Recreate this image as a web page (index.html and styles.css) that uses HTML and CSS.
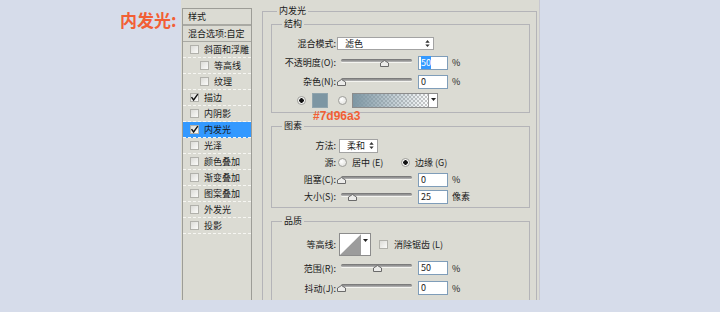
FILE: index.html
```html
<!DOCTYPE html>
<html lang="zh-CN">
<head>
<meta charset="UTF-8">
<title>内发光</title>
<link rel="stylesheet" href="styles.css">
</head>
<body>
<div class="page">
    <div class="title">内发光:</div>
    <div class="dialog">
        <ul class="styles">
            <li class="head">样式</li>
            <li class="blend">混合选项:自定</li>
            <li class="item"><span class="cb"></span>斜面和浮雕</li>
            <li class="item sub"><span class="cb"></span>等高线</li>
            <li class="item sub"><span class="cb"></span>纹理</li>
            <li class="item"><span class="cb"><svg viewBox="0 0 9 9"><path d="M1.5 4.2 L3.6 7 L7.8 1.2"/></svg></span>描边</li>
            <li class="item"><span class="cb"></span>内阴影</li>
            <li class="item active"><span class="cb"><svg viewBox="0 0 9 9"><path d="M1.5 4.2 L3.6 7 L7.8 1.2"/></svg></span>内发光</li>
            <li class="item"><span class="cb"></span>光泽</li>
            <li class="item"><span class="cb"></span>颜色叠加</li>
            <li class="item"><span class="cb"></span>渐变叠加</li>
            <li class="item"><span class="cb"></span>图案叠加</li>
            <li class="item"><span class="cb"></span>外发光</li>
            <li class="item"><span class="cb"></span>投影</li>
        </ul>

        <div class="main">
            <fieldset class="outer">
                <legend>内发光</legend>

                <fieldset class="group g1">
                    <legend>结构</legend>
                    <div class="row">
                        <span class="lbl">混合模式:</span>
                        <div class="select wide">滤色<svg class="updown" viewBox="0 0 5 8"><path d="M0 3 L2.5 0 L5 3 Z M0 5 L2.5 8 L5 5 Z"/></svg></div>
                    </div>
                    <div class="row">
                        <span class="lbl">不透明度(O):</span>
                        <div class="slider"><span class="track"></span><svg class="thumb" style="left:60%" viewBox="0 0 9 7"><path d="M0.5 6.5 V3 L4.5 0.5 L8.5 3 V6.5 Z"/></svg></div>
                        <div class="field"><span class="sel">50</span></div>
                        <span class="unit">%</span>
                    </div>
                    <div class="row">
                        <span class="lbl">杂色(N):</span>
                        <div class="slider"><span class="track"></span><svg class="thumb" style="left:0%" viewBox="0 0 9 7"><path d="M0.5 6.5 V3 L4.5 0.5 L8.5 3 V6.5 Z"/></svg></div>
                        <div class="field">0</div>
                        <span class="unit">%</span>
                    </div>
                    <div class="row colors">
                        <span class="radio on"></span>
                        <span class="swatch"></span>
                        <span class="radio r2"></span>
                        <div class="gradient"><span class="drop"><svg viewBox="0 0 5 3"><path d="M0 0 H5 L2.5 3 Z"/></svg></span></div>
                    </div>
                </fieldset>

                <fieldset class="group g2">
                    <legend>图素</legend>
                    <div class="row">
                        <span class="lbl">方法:</span>
                        <div class="select short">柔和<svg class="updown" viewBox="0 0 5 8"><path d="M0 3 L2.5 0 L5 3 Z M0 5 L2.5 8 L5 5 Z"/></svg></div>
                    </div>
                    <div class="row">
                        <span class="lbl">源:</span>
                        <span class="opt"><span class="radio"></span>居中 (E)</span>
                        <span class="opt"><span class="radio on"></span>边缘 (G)</span>
                    </div>
                    <div class="row">
                        <span class="lbl">阻塞(C):</span>
                        <div class="slider"><span class="track"></span><svg class="thumb" style="left:0%" viewBox="0 0 9 7"><path d="M0.5 6.5 V3 L4.5 0.5 L8.5 3 V6.5 Z"/></svg></div>
                        <div class="field">0</div>
                        <span class="unit">%</span>
                    </div>
                    <div class="row">
                        <span class="lbl">大小(S):</span>
                        <div class="slider"><span class="track"></span><svg class="thumb" style="left:15%" viewBox="0 0 9 7"><path d="M0.5 6.5 V3 L4.5 0.5 L8.5 3 V6.5 Z"/></svg></div>
                        <div class="field">25</div>
                        <span class="unit">像素</span>
                    </div>
                </fieldset>

                <fieldset class="group g3">
                    <legend>品质</legend>
                    <div class="row tall">
                        <span class="lbl">等高线:</span>
                        <div class="contour">
                            <svg class="curve" viewBox="0 0 22 21" preserveAspectRatio="none"><path d="M0 21 L22 0 V21 Z"/></svg>
                            <span class="drop"><svg viewBox="0 0 5 3"><path d="M0 0 H5 L2.5 3 Z"/></svg></span>
                        </div>
                        <span class="cb aa"></span>
                        <span class="aa-text">消除锯齿 (L)</span>
                    </div>
                    <div class="row first">
                        <span class="lbl">范围(R):</span>
                        <div class="slider"><span class="track"></span><svg class="thumb" style="left:50%" viewBox="0 0 9 7"><path d="M0.5 6.5 V3 L4.5 0.5 L8.5 3 V6.5 Z"/></svg></div>
                        <div class="field">50</div>
                        <span class="unit">%</span>
                    </div>
                    <div class="row">
                        <span class="lbl">抖动(J):</span>
                        <div class="slider"><span class="track"></span><svg class="thumb" style="left:0%" viewBox="0 0 9 7"><path d="M0.5 6.5 V3 L4.5 0.5 L8.5 3 V6.5 Z"/></svg></div>
                        <div class="field">0</div>
                        <span class="unit">%</span>
                    </div>
                </fieldset>
            </fieldset>
        </div>

        <div class="note">#7d96a3</div>
    </div>
</div>
</body>
</html>
```

FILE: styles.css
```css
* {
    box-sizing: border-box;
}
body {
    margin: 0;
    width: 720px;
    height: 312px;
    overflow: hidden;
    background-color: #d6dcea; /* fondo azulado */
    font-family: "Noto Sans CJK SC", "Noto Sans", sans-serif;
    font-size: 9px;
    color: #1a1a1a;
}
.page {
    display: flex;
    height: 312px;
    padding-left: 120px;
}
.title {
    width: 61px;
    padding-top: 9px;
    font-size: 17px;
    line-height: 22px;
    font-weight: bold;
    color: #f25f35;
}
.dialog {
    position: relative;
    display: flex;
    width: 359px;
    height: 300px;
    overflow: hidden;
    background-color: #dbdbd3;
    border-right: 1px solid #c8c8d0;
}

/* lista de estilos */
.styles {
    list-style: none;
    margin: 8px 0 0 1px;
    padding: 0;
    width: 70px;
    height: 292px;
    border: 1px solid #9d9d97;
    border-bottom: none;
}
.styles .head {
    height: 17px;
    line-height: 15px;
    padding-left: 5px;
    border-bottom: 2px solid #a9a9a3;
}
.styles .blend {
    height: 16px;
    line-height: 15px;
    padding-left: 5px;
    border-bottom: 1px solid #a9a9a3;
}
.styles .item {
    display: flex;
    align-items: center;
    gap: 5px;
    height: 16px;
    padding-left: 7px;
    border-bottom: 1px dashed #f6f6f2;
}
.styles .item.sub {
    padding-left: 17px;
}
.styles .item.active {
    background-color: #3399ff;
}
.cb {
    flex: none;
    display: inline-block;
    width: 9px;
    height: 9px;
    border: 1px solid #b1b1ab;
    background: linear-gradient(135deg, #dcdcd8, #fbfbf9);
}
.cb svg {
    display: block;
    width: 9px;
    height: 9px;
    margin: -1px 0 0 -1px;
    fill: none;
    stroke: #111;
    stroke-width: 1.4;
}

/* panel principal */
.main {
    margin-left: 10px;
    width: 276px;
}
fieldset {
    min-width: 0;
    margin: 0;
    border: 1px solid #b4b4b8;
}
legend {
    padding: 0 2px;
    line-height: 12px;
}
.outer {
    margin-top: 5px;
    width: 275px;
    height: 320px;
    padding: 1px 6px 0 8px;
}
.outer > legend {
    margin-left: 6px;
}
.group {
    width: 259px;
    padding: 0;
}
.group > legend {
    margin-left: 10px;
}
.g1 {
    padding: 4px 0 2px;
}
.g2 {
    margin-top: 7px;
    padding: 5px 0 2px;
}
.g3 {
    margin-top: 7px;
    padding: 5px 0 20px;
}
.row {
    display: flex;
    align-items: center;
    height: 19px;
}
.g2 .row {
    height: 17px;
}
.g3 .row {
    height: 20px;
}
.g3 .row.tall {
    height: 24px;
}
.g3 .row.first {
    margin-top: 2px;
}
.lbl {
    flex: none;
    width: 64px;
    text-align: right;
}

.select {
    display: flex;
    align-items: center;
    justify-content: space-between;
    height: 13px;
    padding: 0 3px 0 7px;
    background-color: #fff;
    border: 1px solid #a3a3a3;
}
.select.wide {
    width: 97px;
    margin-left: 1px;
}
.select.short {
    width: 39px;
    margin-left: 3px;
    height: 14px;
}
.updown {
    width: 5px;
    height: 7px;
    fill: #333;
}

.slider {
    position: relative;
    width: 71px;
    height: 8px;
    margin-left: 5px;
}
.track {
    display: block;
    height: 3px;
    border-radius: 2px;
    background: linear-gradient(#6f6f6f, #b9b9b9);
    box-shadow: 0 1px 0 #f4f4f0;
}
.thumb {
    position: absolute;
    top: 1px;
    width: 9px;
    height: 7px;
    margin-left: -4px;
    fill: #ececea;
    stroke: #6a6a6a;
    stroke-width: 1;
}
.field {
    width: 30px;
    height: 14px;
    margin-left: 6px;
    padding-left: 2px;
    line-height: 12px;
    background-color: #fff;
    border: 1px solid #7f9db9;
}
.sel {
    background-color: #3399ff;
    color: #fff;
}
.unit {
    margin-left: 4px;
}

.radio {
    flex: none;
    display: inline-block;
    width: 9px;
    height: 9px;
    border: 1px solid #9e9e9a;
    border-radius: 50%;
    background: radial-gradient(circle at 35% 35%, #fff, #dcdcd8);
}
.radio.on {
    background: radial-gradient(circle, #111 0 2px, #f6f6f4 2.5px);
}
.colors .radio.on {
    margin-left: 25px;
}
.swatch {
    width: 16px;
    height: 15px;
    margin-left: 6px;
    background-color: #7d96a3;
    border: 1px solid #90a4ad;
}
.colors .r2 {
    margin-left: 10px;
}
.gradient {
    display: flex;
    justify-content: flex-end;
    width: 86px;
    height: 15px;
    margin-left: 5px;
    border: 1px solid #8c8c8c;
    background:
        linear-gradient(to right, #7d96a3, rgba(125, 150, 163, 0) 92%),
        repeating-conic-gradient(#c9c9c9 0 25%, #ffffff 0 50%) 0 0 / 4px 4px;
}
.drop {
    display: flex;
    justify-content: center;
    padding-top: 4px;
    width: 9px;
    background-color: #fff;
    border-left: 1px solid #9a9a9a;
}
.drop svg {
    width: 5px;
    height: 3px;
    fill: #222;
}

.opt {
    display: inline-flex;
    align-items: center;
    gap: 5px;
    width: 61px;
    margin-left: 2px;
}

.contour {
    display: flex;
    width: 32px;
    height: 23px;
    margin-left: 3px;
    background-color: #fff;
    border: 1px solid #8c8c8c;
}
.curve {
    width: 22px;
    height: 21px;
    fill: #9c9c9c;
}
.contour .drop {
    padding-top: 5px;
    border-left: none;
}
.cb.aa {
    margin-left: 8px;
}
.aa-text {
    margin-left: 6px;
}

/* anotación del color */
.note {
    position: absolute;
    left: 132px;
    top: 109px;
    font-family: "Liberation Sans", Arial, sans-serif;
    font-size: 12px;
    font-weight: bold;
    color: #f25f35;
}
```
